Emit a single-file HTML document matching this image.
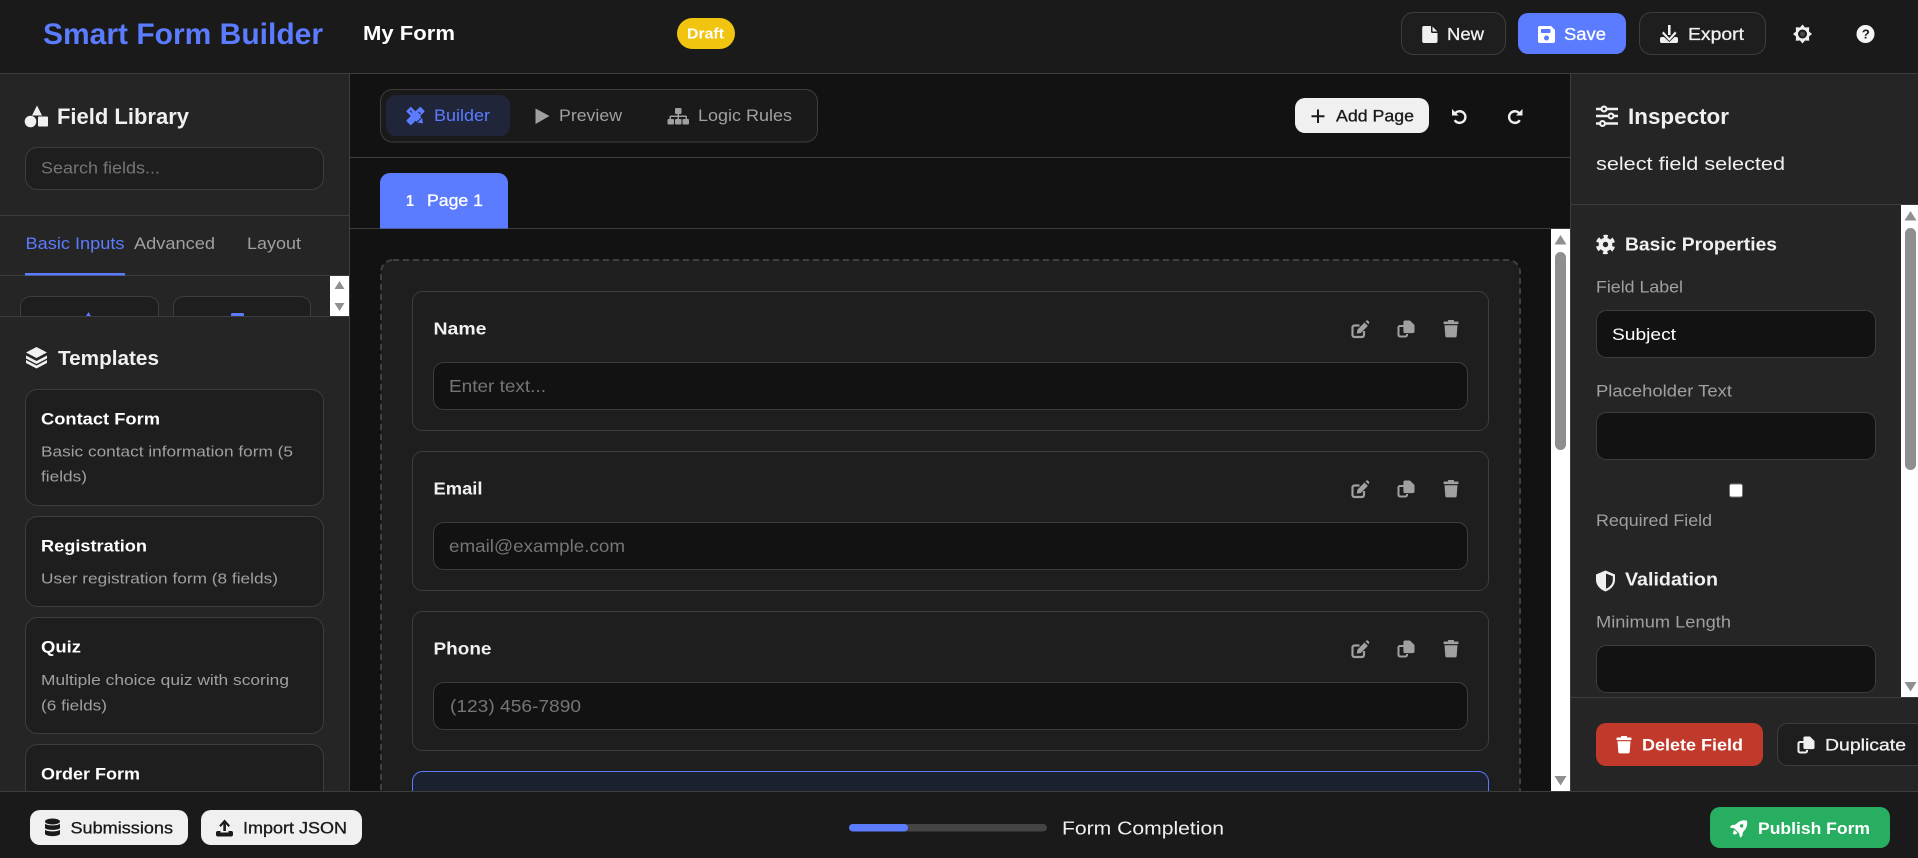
<!DOCTYPE html>
<html lang="en">
<head>
<meta charset="utf-8">
<title>Smart Form Builder</title>
<style>
html,body{margin:0;padding:0;width:1918px;height:858px;overflow:hidden;background:#121212}
svg{display:block;position:absolute;left:0;top:0}
text{font-family:"Liberation Sans",Arial,sans-serif;fill:currentColor;color:#f0f0f0;white-space:pre}
text.b{font-weight:700}
text.m{stroke:currentColor;stroke-width:.3px}
text.mu{color:#a0a0a0}
text.ph{color:#757575}
text.bl{color:#5b7cff}
text.dk{color:#1a1a1a}
text.w{color:#fff}
.ln{stroke:#3d3d3d;stroke-width:1;fill:none}
</style>
</head>
<body>
<svg xmlns="http://www.w3.org/2000/svg" width="1918" height="858" viewBox="0 0 1918 858">
<defs>
  <g id="trash">
    <rect x="-7.5" y="-7.5" width="15" height="2.6" rx=".8" fill="currentColor"/>
    <rect x="-3" y="-9" width="6" height="2" rx=".6" fill="currentColor"/>
    <path d="M-6.5-3.8H6.5L5.7 7a1.6 1.6 0 0 1-1.6 1.4H-4.1A1.6 1.6 0 0 1-5.7 7Z" fill="currentColor"/>
  </g>
  <g id="copy">
    <path d="M-2.5-3H-6A1.500 1.500 0 0 0-7.500-1.500V6A1.500 1.500 0 0 0-6 7.500H-.5A1.500 1.500 0 0 0 1 6V5" fill="none" stroke="currentColor" stroke-width="2"/>
    <path d="M-1-8.500H4L8.500-4V2.500A1.600 1.600 0 0 1 6.900 4.100H-1A1.600 1.600 0 0 1-2.600 2.500V-6.900A1.600 1.600 0 0 1-1-8.500Z" fill="currentColor"/>
  </g>
  <g id="pen">
    <path d="M-.5-3.500H-5.500A2 2 0 0 0-7.500-1.500V6A2 2 0 0 0-5.500 8H2A2 2 0 0 0 4 6V2" fill="none" stroke="currentColor" stroke-width="2.200"/>
    <path d="M-3.200 4.600-2.600 .6 4.500-6.500 7.900-3.100 .8 4Z" fill="currentColor"/>
    <path d="M5.500-7.500 6.300-8.300A1.200 1.200 0 0 1 8-8.300L9-7.300A1.200 1.200 0 0 1 9-5.600L8.600-4.800Z" fill="currentColor"/>
  </g>
  <g id="gear">
    <circle r="6.800" fill="currentColor"/>
    <circle r="8" fill="none" stroke="currentColor" stroke-width="3.400" stroke-dasharray="4.500 3.880" stroke-dashoffset="2.250" transform="rotate(-90)"/>
    <circle r="2.700" fill="#252525"/>
  </g>
</defs>

<!-- base -->
<rect width="1918" height="858" fill="#121212"/>

<!-- CANVAS -->
<rect x="381" y="260" width="1139" height="570" rx="12" fill="#1e1e1e" stroke="#404040" stroke-width="2" stroke-dasharray="6 4"/>

<g fill="#1e1e1e" stroke="#3d3d3d">
  <rect x="412.500" y="291.500" width="1076" height="139" rx="10"/>
  <rect x="412.500" y="451.500" width="1076" height="139" rx="10"/>
  <rect x="412.500" y="611.500" width="1076" height="139" rx="10"/>
</g>
<rect x="412.500" y="771.500" width="1076" height="60" rx="10" fill="#1c2130" stroke="#5b7cff"/>

<g fill="#121212" stroke="#3d3d3d">
  <rect x="433.500" y="362.500" width="1034" height="47" rx="10"/>
  <rect x="433.500" y="522.500" width="1034" height="47" rx="10"/>
  <rect x="433.500" y="682.500" width="1034" height="47" rx="10"/>
</g>

<text class="b" x="433.500" y="334.500" font-size="17.500" textLength="53" lengthAdjust="spacingAndGlyphs">Name</text>
<text class="b" x="433.500" y="494.500" font-size="17.500" textLength="49" lengthAdjust="spacingAndGlyphs">Email</text>
<text class="b" x="433.500" y="654.500" font-size="17.500" textLength="58" lengthAdjust="spacingAndGlyphs">Phone</text>
<text class="ph" x="449" y="392" font-size="17.500" textLength="97" lengthAdjust="spacingAndGlyphs">Enter text...</text>
<text class="ph" x="449" y="552" font-size="17.500" textLength="176" lengthAdjust="spacingAndGlyphs">email@example.com</text>
<text class="ph" x="450" y="712" font-size="17.500" textLength="131" lengthAdjust="spacingAndGlyphs">(123) 456-7890</text>

<g color="#a0a0a0">
  <use href="#pen" x="1360" y="329"/><use href="#copy" x="1406" y="329"/><use href="#trash" x="1451" y="329"/>
  <use href="#pen" x="1360" y="489"/><use href="#copy" x="1406" y="489"/><use href="#trash" x="1451" y="489"/>
  <use href="#pen" x="1360" y="649"/><use href="#copy" x="1406" y="649"/><use href="#trash" x="1451" y="649"/>
</g>

<!-- canvas scrollbar -->
<rect x="1551" y="229" width="19" height="562" fill="#fff"/>
<rect x="1555" y="252" width="11" height="198" rx="5.500" fill="#8f8f8f"/>
<path d="M1560.500 235 1566.500 244.500H1554.500Z" fill="#8f8f8f"/>
<path d="M1560.500 785.500 1566.500 776H1554.500Z" fill="#8f8f8f"/>

<!-- toolbar / page tabs -->
<rect x="350" y="74" width="1220" height="155" fill="#121212"/>
<path class="ln" d="M350 157.500H1570M350 228.500H1570"/>
<rect x="380.500" y="89.500" width="437" height="52.500" rx="12" fill="#1a1a1a" stroke="#3d3d3d"/>
<rect x="386" y="95" width="124" height="41" rx="10" fill="#20253a"/>

<g transform="translate(415.500 116)" fill="#5b7cff">
  <g transform="rotate(45)"><rect x="-3.300" y="-10" width="6.600" height="20" rx="1"/></g>
  <g transform="rotate(-45)"><rect x="-3.300" y="-10" width="6.600" height="15" rx=".8"/><path d="M-3.300 6 0 10.500 3.300 6Z"/></g>
  <path d="M-5.500-5.500-3.500-3.500M5-2 3-4" stroke="#20253a" stroke-width="1"/>
</g>
<text class="bl" x="434" y="121" font-size="17" textLength="56" lengthAdjust="spacingAndGlyphs">Builder</text>

<path d="M535.500 108.500 549.500 116 535.500 124Z" fill="#a0a0a0"/>
<text class="mu" x="559" y="121" font-size="17" textLength="63" lengthAdjust="spacingAndGlyphs">Preview</text>

<g fill="#a0a0a0">
  <rect x="675" y="108" width="6.500" height="6" rx="1"/>
  <path d="M677.500 113H679V115.500H685.500A1.500 1.500 0 0 1 687 117V119.500H685.500V117H679V119.500H677.500V117H671V119.500H669.500V117A1.500 1.500 0 0 1 671 115.500H677.500Z"/>
  <rect x="667.500" y="119" width="6.500" height="5.500" rx="1"/>
  <rect x="675" y="119" width="6.500" height="5.500" rx="1"/>
  <rect x="682.500" y="119" width="6.500" height="5.500" rx="1"/>
</g>
<text class="mu" x="698" y="121" font-size="17" textLength="94" lengthAdjust="spacingAndGlyphs">Logic Rules</text>

<rect x="1295" y="98" width="134" height="35" rx="10" fill="#f0f0f0"/>
<path d="M1318 109.500V123M1311.500 116.200H1324.500" stroke="#1a1a1a" stroke-width="2"/>
<text class="dk m" x="1336" y="121.500" font-size="16.500" textLength="78" lengthAdjust="spacingAndGlyphs">Add Page</text>

<g transform="translate(1459 116)" color="#f0f0f0">
  <path d="M-4-2.500A5.800 5.800 0 1 1-4.300 4.200" fill="none" stroke="currentColor" stroke-width="2.400"/>
  <path d="M-7-7V-.5H-.5Z" fill="currentColor"/>
</g>
<g transform="translate(1515.500 116) scale(-1 1)" color="#f0f0f0">
  <path d="M-4-2.500A5.800 5.800 0 1 1-4.300 4.200" fill="none" stroke="currentColor" stroke-width="2.400"/>
  <path d="M-7-7V-.5H-.5Z" fill="currentColor"/>
</g>

<path d="M380 228.500V183A10 10 0 0 1 390 173H498A10 10 0 0 1 508 183V228.500Z" fill="#5b7cff"/>
<text class="w b" x="406" y="206" font-size="16" textLength="8" lengthAdjust="spacingAndGlyphs">1</text>
<text class="w m" x="427" y="206" font-size="17" textLength="56" lengthAdjust="spacingAndGlyphs">Page 1</text>

<!-- LEFT SIDEBAR -->
<rect x="0" y="74" width="350" height="717" fill="#252525"/>
<path class="ln" d="M349.500 74V791"/>

<g fill="#f0f0f0">
  <path d="M37 105.500 42 115.500H32Z"/>
  <circle cx="30.500" cy="121.500" r="5.800"/>
  <rect x="38" y="116.500" width="10" height="10" rx="1"/>
</g>
<text class="b" x="57" y="124" font-size="22.500" textLength="132" lengthAdjust="spacingAndGlyphs">Field Library</text>

<rect x="25.500" y="147.500" width="298" height="42" rx="12" fill="#1e1e1e" stroke="#3d3d3d"/>
<text class="ph" x="41" y="173.500" font-size="17" textLength="119" lengthAdjust="spacingAndGlyphs">Search fields...</text>

<path class="ln" d="M0 215.500H349M0 275.500H349"/>
<text class="bl" x="25.500" y="249" font-size="16.500" textLength="99" lengthAdjust="spacingAndGlyphs">Basic Inputs</text>
<text class="mu" x="134" y="249" font-size="16.500" textLength="81" lengthAdjust="spacingAndGlyphs">Advanced</text>
<text class="mu" x="247" y="249" font-size="16.500" textLength="54" lengthAdjust="spacingAndGlyphs">Layout</text>
<rect x="25" y="273" width="100" height="2.500" fill="#5b7cff"/>

<rect x="20.500" y="296.500" width="138" height="60" rx="10" fill="#1e1e1e" stroke="#3d3d3d"/>
<rect x="173.500" y="296.500" width="137" height="60" rx="10" fill="#1e1e1e" stroke="#3d3d3d"/>
<path d="M88.500 312 92 318H85Z" fill="#5b7cff"/>
<rect x="231" y="313" width="13" height="6" rx="1.500" fill="#5b7cff"/>
<rect x="330" y="276" width="19" height="40" fill="#fff"/>
<path d="M339.500 281 344.500 289H334.500Z" fill="#8f8f8f"/>
<path d="M339.500 311 344.500 303H334.500Z" fill="#8f8f8f"/>

<!-- templates -->
<rect x="0" y="316" width="349" height="475" fill="#252525"/>
<path class="ln" d="M0 316.500H349"/>

<g fill="#f0f0f0">
  <path d="M36.500 347 47 352.500 36.500 358 26 352.500Z"/>
  <path d="M26 355.500 36.500 361 47 355.500V358.500L36.500 364 26 358.500Z"/>
  <path d="M26 360 36.500 365.500 47 360V363L36.500 368.500 26 363Z"/>
</g>
<text class="b" x="58" y="365" font-size="20.500" textLength="101" lengthAdjust="spacingAndGlyphs">Templates</text>

<g fill="#1e1e1e" stroke="#3d3d3d">
  <rect x="25.500" y="389.500" width="298" height="116" rx="12"/>
  <rect x="25.500" y="516.500" width="298" height="90" rx="12"/>
  <rect x="25.500" y="617.500" width="298" height="116" rx="12"/>
  <rect x="25.500" y="744.500" width="298" height="90" rx="12"/>
</g>
<text class="b w" x="41" y="424.500" font-size="16.500" textLength="119" lengthAdjust="spacingAndGlyphs">Contact Form</text>
<text class="mu" x="41" y="456.500" font-size="15" textLength="252" lengthAdjust="spacingAndGlyphs">Basic contact information form (5</text>
<text class="mu" x="41" y="481.500" font-size="15" textLength="46" lengthAdjust="spacingAndGlyphs">fields)</text>
<text class="b w" x="41" y="551.500" font-size="16.500" textLength="106" lengthAdjust="spacingAndGlyphs">Registration</text>
<text class="mu" x="41" y="583.500" font-size="15" textLength="237" lengthAdjust="spacingAndGlyphs">User registration form (8 fields)</text>
<text class="b w" x="41" y="652.500" font-size="16.500" textLength="40" lengthAdjust="spacingAndGlyphs">Quiz</text>
<text class="mu" x="41" y="685" font-size="15" textLength="248" lengthAdjust="spacingAndGlyphs">Multiple choice quiz with scoring</text>
<text class="mu" x="41" y="710.500" font-size="15" textLength="66" lengthAdjust="spacingAndGlyphs">(6 fields)</text>
<text class="b w" x="41" y="779.500" font-size="16.500" textLength="99" lengthAdjust="spacingAndGlyphs">Order Form</text>

<!-- RIGHT SIDEBAR -->
<rect x="1570" y="74" width="348" height="717" fill="#252525"/>
<path class="ln" d="M1570.500 74V791M1570 204.500H1918M1570 697.500H1918"/>

<path d="M1596 109H1618M1596 116H1618M1596 123.500H1618" fill="none" stroke="#f0f0f0" stroke-width="2.400"/>
<g fill="#f0f0f0">
  <circle cx="1604" cy="109" r="3.500"/><circle cx="1611" cy="116" r="3.500"/><circle cx="1602.500" cy="123.500" r="3.500"/>
</g>
<g fill="#252525">
  <circle cx="1604" cy="109" r="1.400"/><circle cx="1611" cy="116" r="1.400"/><circle cx="1602.500" cy="123.500" r="1.400"/>
</g>
<text class="b" x="1628" y="124" font-size="22.500" textLength="101" lengthAdjust="spacingAndGlyphs">Inspector</text>
<text x="1596" y="170" font-size="18.500" textLength="189" lengthAdjust="spacingAndGlyphs">select field selected</text>

<use href="#gear" x="1605.500" y="244.500" color="#f0f0f0"/>
<text class="b" x="1625" y="250.500" font-size="18" textLength="152" lengthAdjust="spacingAndGlyphs">Basic Properties</text>
<text class="mu" x="1596" y="292.500" font-size="16.500" textLength="87" lengthAdjust="spacingAndGlyphs">Field Label</text>
<rect x="1596.500" y="310.500" width="279" height="47" rx="10" fill="#121212" stroke="#3d3d3d"/>
<text class="w" x="1612" y="340" font-size="17" textLength="64" lengthAdjust="spacingAndGlyphs">Subject</text>
<text class="mu" x="1596" y="396.500" font-size="16.500" textLength="136" lengthAdjust="spacingAndGlyphs">Placeholder Text</text>
<rect x="1596.500" y="412.500" width="279" height="47" rx="10" fill="#121212" stroke="#3d3d3d"/>
<rect x="1729.500" y="484" width="13" height="13" rx="2" fill="#fff" stroke="#767676"/>
<text class="mu" x="1596" y="526" font-size="16.500" textLength="116" lengthAdjust="spacingAndGlyphs">Required Field</text>

<path d="M1605.500 570.500 1615 574.500V580C1615 585 1611 589.500 1605.500 591.500 1600 589.500 1596 585 1596 580V574.500Z" fill="#f0f0f0"/>
<path d="M1606 573.500 1612.800 576.300V580C1612.800 584 1609.500 587.300 1606 588.800Z" fill="#252525"/>
<text class="b" x="1625" y="585.500" font-size="18" textLength="93" lengthAdjust="spacingAndGlyphs">Validation</text>
<text class="mu" x="1596" y="627.500" font-size="16.500" textLength="135" lengthAdjust="spacingAndGlyphs">Minimum Length</text>
<rect x="1596.500" y="645.500" width="279" height="47" rx="10" fill="#121212" stroke="#3d3d3d"/>

<!-- inspector scrollbar -->
<rect x="1901" y="205" width="17" height="492" fill="#fff"/>
<rect x="1905" y="228" width="11" height="242" rx="5.500" fill="#8f8f8f"/>
<path d="M1910.500 211 1916.500 220.500H1904.500Z" fill="#8f8f8f"/>
<path d="M1910.500 691.500 1916.500 682H1904.500Z" fill="#8f8f8f"/>

<!-- inspector actions -->
<rect x="1596" y="723" width="167" height="43" rx="10" fill="#c0392b"/>
<use href="#trash" x="1624" y="745" color="#fff"/>
<text class="w b" x="1642" y="750.500" font-size="16.500" textLength="101" lengthAdjust="spacingAndGlyphs">Delete Field</text>
<path d="M1918 723.500H1787.500A10 10 0 0 0 1777.500 733.500V755.500A10 10 0 0 0 1787.500 765.500H1918" fill="#1e1e1e" stroke="#3d3d3d"/>
<use href="#copy" x="1806" y="745" color="#f0f0f0"/>
<text class="m" x="1825" y="750.500" font-size="17" textLength="81" lengthAdjust="spacingAndGlyphs">Duplicate</text>

<!-- HEADER -->
<rect x="0" y="0" width="1918" height="73" fill="#1a1a1a"/>
<path class="ln" d="M0 73.500H1918"/>
<text class="b bl" x="43" y="44" font-size="29.500" textLength="280" lengthAdjust="spacingAndGlyphs">Smart Form Builder</text>
<text class="b w" x="363" y="40" font-size="20.500" textLength="92" lengthAdjust="spacingAndGlyphs">My Form</text>
<rect x="677" y="18" width="58" height="31" rx="15.500" fill="#f1c40f"/>
<text class="w b" x="687" y="38.500" font-size="15" textLength="37" lengthAdjust="spacingAndGlyphs">Draft</text>

<rect x="1401.500" y="12.500" width="104" height="42" rx="12" fill="#1e1e1e" stroke="#3d3d3d"/>
<path d="M1424 26H1431V31.500A1.500 1.500 0 0 0 1432.500 33H1437.500V41.500A1.800 1.800 0 0 1 1435.700 43H1424A1.800 1.800 0 0 1 1422.200 41.500V27.800A1.800 1.800 0 0 1 1424 26ZM1432.500 26.500 1437.300 31.500H1432.500Z" fill="#f0f0f0"/>
<text class="m" x="1447" y="40" font-size="17.500" textLength="37" lengthAdjust="spacingAndGlyphs">New</text>

<rect x="1518" y="13" width="108" height="41" rx="10" fill="#5b7cff"/>
<path d="M1540 26H1551L1555 30V41A2 2 0 0 1 1553 43H1540A2 2 0 0 1 1538 41V28A2 2 0 0 1 1540 26Z" fill="#fff"/>
<rect x="1541" y="29" width="9.500" height="4" rx=".7" fill="#5b7cff"/>
<circle cx="1546.500" cy="38" r="2.500" fill="#5b7cff"/>
<text class="w m" x="1564" y="40" font-size="17.500" textLength="42" lengthAdjust="spacingAndGlyphs">Save</text>

<rect x="1639.500" y="12.500" width="126" height="42" rx="12" fill="#1e1e1e" stroke="#3d3d3d"/>
<g fill="#f0f0f0">
  <rect x="1668" y="25" width="2.600" height="10"/>
  <path d="M1663.500 31.500 1669.300 38 1675 31.500 1676.500 33.200 1669.300 41 1662 33.200Z"/>
  <path d="M1660 38.500A1.800 1.800 0 0 1 1661.800 37H1664L1669.300 42 1674.500 37H1676.200A1.800 1.800 0 0 1 1678 38.500V41.200A1.800 1.800 0 0 1 1676.200 43H1661.800A1.800 1.800 0 0 1 1660 41.200Z"/>
</g>
<text class="m" x="1688" y="40" font-size="17.500" textLength="56" lengthAdjust="spacingAndGlyphs">Export</text>

<g transform="translate(1802.500 34)">
  <path d="M0-9.500 2.500-6.500 6.700-6.700 6.500-2.500 9.500 0 6.500 2.500 6.700 6.700 2.500 6.500 0 9.500-2.500 6.500-6.700 6.700-6.500 2.500-9.500 0-6.500-2.500-6.700-6.700-2.500-6.500Z" fill="#f0f0f0"/>
  <circle r="4.500" fill="#1a1a1a"/>
  <circle r="2.400" fill="#4a4a4a"/>
</g>
<circle cx="1865.500" cy="34" r="9" fill="#f5f5f5"/>
<text class="b" x="1861.900" y="38.500" font-size="13" style="color:#1a1a1a">?</text>

<!-- FOOTER -->
<rect x="0" y="791" width="1918" height="67" fill="#1a1a1a"/>
<path class="ln" d="M0 791.500H1918"/>

<rect x="30" y="810" width="158" height="35" rx="10" fill="#f0f0f0"/>
<g fill="#1a1a1a">
  <ellipse cx="52.500" cy="821.500" rx="7.500" ry="3"/>
  <path d="M45 823.500C46 826 59 826 60 823.500V828C59 830.500 46 830.500 45 828Z"/>
  <path d="M45 829.500C46 832 59 832 60 829.500V834C58.500 836.800 46.500 836.800 45 834Z"/>
</g>
<text class="dk m" x="70.500" y="833.500" font-size="16.500" textLength="102.500" lengthAdjust="spacingAndGlyphs">Submissions</text>

<rect x="201" y="810" width="161" height="35" rx="10" fill="#f0f0f0"/>
<g fill="#1a1a1a">
  <rect x="223.300" y="823" width="2.600" height="8"/>
  <path d="M224.600 819.500 230 825.500 228.500 827 224.600 822.800 220.700 827 219.200 825.500Z"/>
  <path d="M216 832.800A1.800 1.800 0 0 1 217.800 831H220.500V832.500H228.500V831H231.200A1.800 1.800 0 0 1 233 832.800V834.500A1.800 1.800 0 0 1 231.200 836.500H217.800A1.800 1.800 0 0 1 216 834.500Z"/>
</g>
<text class="dk m" x="243" y="833.500" font-size="16.500" textLength="104" lengthAdjust="spacingAndGlyphs">Import JSON</text>

<rect x="849" y="824" width="198" height="7.500" rx="3.700" fill="#444"/>
<rect x="849" y="824" width="59" height="7.500" rx="3.700" fill="#5b7cff"/>
<text x="1062" y="834.500" font-size="18.500" textLength="162" lengthAdjust="spacingAndGlyphs">Form Completion</text>

<rect x="1710" y="807" width="180" height="41" rx="10" fill="#27ae60"/>
<g transform="translate(1739.500 828) rotate(45)" fill="#fff">
  <path d="M0-10.500C5-7.500 5.800-2.500 5 4H-5C-5.800-2.500-5-7.500 0-10.500Z"/>
  <path d="M-5 0-7.500 3.500V6.500L-4 4.500ZM5 0 7.500 3.500V6.500L4 4.500Z"/>
  <path d="M-2.500 5H2.500L1 8.500H-1Z"/>
  <circle cy="-3" r="1.700" fill="#27ae60"/>
</g>
<text class="w b" x="1758" y="834" font-size="16.500" textLength="112" lengthAdjust="spacingAndGlyphs">Publish Form</text>
</svg>
</body>
</html>
